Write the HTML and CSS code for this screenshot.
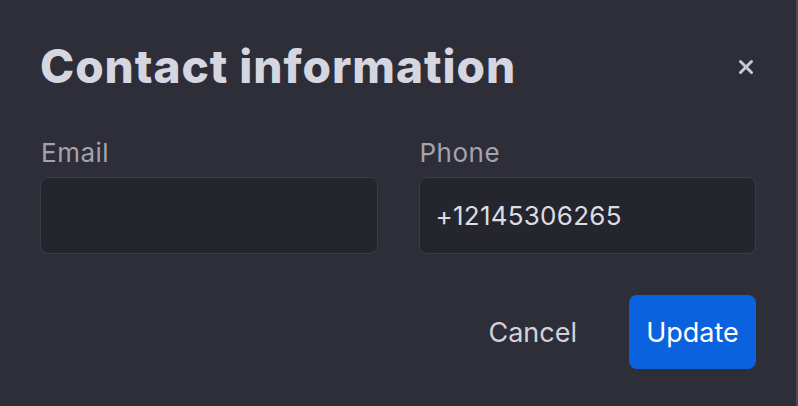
FILE: index.html
```html
<!DOCTYPE html>
<html>
<head>
<meta charset="utf-8">
<link rel="stylesheet" href="styles.css">
</head>
<body>
<div class="page">
  <div class="dialog">
    <div class="header">
      <h1 class="title">Contact information</h1>
      <button class="close" aria-label="Close">
        <svg width="16" height="16" viewBox="0 0 16 16"><path d="M2.5 2.5 L13.5 13.5 M13.5 2.5 L2.5 13.5" stroke="#c9c9d3" stroke-width="3" stroke-linecap="round"/></svg>
      </button>
    </div>
    <div class="fields">
      <div class="field">
        <label class="label">Email</label>
        <div class="input"></div>
      </div>
      <div class="field">
        <label class="label">Phone</label>
        <div class="input">+12145306265</div>
      </div>
    </div>
    <div class="actions">
      <button class="btn cancel">Cancel</button>
      <button class="btn update">Update</button>
    </div>
  </div>
  <div class="edge"></div>
</div>
</body>
</html>
```
FILE: styles.css
```css
html, body {
  margin: 0;
  padding: 0;
  background: #2e2e38;
  height: 100%;
}
.page {
  display: flex;
  width: 798px;
  height: 406px;
  font-family: Inter, "Noto Sans", sans-serif;
}
.dialog {
  flex: 1;
  padding: 34px 40px 0 40px;
  box-sizing: border-box;
}
.edge {
  width: 2px;
  background: #4a4a55;
}
.header {
  display: flex;
  align-items: center;
  justify-content: space-between;
}
.title {
  margin: 0;
  font-size: 46px;
  font-weight: 800;
  color: #d6d6e0;
  letter-spacing: 0.95px;
  line-height: 64px;
}
.close {
  background: none;
  border: 0;
  padding: 0;
  width: 16px;
  height: 16px;
  display: flex;
  align-items: center;
  justify-content: center;
  margin-right: 2px;
  margin-top: 2px;
}
.fields {
  display: grid;
  grid-template-columns: 1fr 1fr;
  gap: 41px;
  margin-top: 40px;
}
.field {
  display: flex;
  flex-direction: column;
}
.label {
  font-size: 26px;
  color: #a3a3ae;
  line-height: 30px;
  margin-bottom: 9px;
  letter-spacing: 0.5px;
  padding-left: 1px;
}
.input {
  height: 77px;
  box-sizing: border-box;
  background: #24252d;
  border: 1.5px solid #3b3c46;
  border-radius: 8px;
  padding: 0 16px;
  display: flex;
  align-items: center;
  font-size: 26px;
  letter-spacing: 0.25px;
  color: #dcdce4;
}
.actions {
  display: flex;
  justify-content: flex-end;
  align-items: center;
  gap: 52px;
  margin-top: 41px;
}
.btn {
  font-family: Inter, "Noto Sans", sans-serif;
  font-size: 27px;
  border: 0;
  cursor: pointer;
}
.cancel {
  background: none;
  color: #d2d2dc;
  padding: 0;
}
.update {
  background: #0b62de;
  color: #ffffff;
  border-radius: 8px;
  width: 127px;
  height: 74px;
  padding: 0;
}
```
